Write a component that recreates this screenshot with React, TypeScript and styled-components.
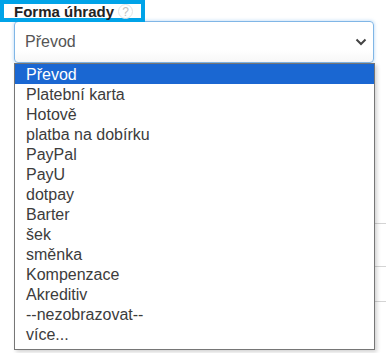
import React from "react";
import styled, { createGlobalStyle } from "styled-components";

const options = [
  "Převod",
  "Platební karta",
  "Hotově",
  "platba na dobírku",
  "PayPal",
  "PayU",
  "dotpay",
  "Barter",
  "šek",
  "směnka",
  "Kompenzace",
  "Akreditiv",
  "--nezobrazovat--",
  "více...",
];

const GlobalStyle = createGlobalStyle`
  html, body {
    margin: 0;
    padding: 0;
    background: #fff;
    font-family: "Liberation Sans", Arial, sans-serif;
  }
`;

const Page = styled.div`
  position: relative;
  width: 386px;
  height: 353px;
  overflow: hidden;
  background: #fff;
`;

const LabelBox = styled.div`
  display: inline-flex;
  align-items: center;
  gap: 4px;
  width: 145px;
  height: 22px;
  box-sizing: border-box;
  border: 4px solid #00a3e8;
  padding: 1px 0 0 10px;
  background: #fff;
`;

const Label = styled.span`
  font-weight: bold;
  font-size: 15px;
  color: #222;
  line-height: 14px;
`;

const Help = styled.span`
  display: inline-flex;
  align-items: center;
  justify-content: center;
  width: 13px;
  height: 13px;
  border-radius: 50%;
  border: 1px solid #e4e4e4;
  color: #c0c0c0;
  font-size: 12px;
  line-height: 12px;
`;

const Field = styled.div`
  margin: -1px 12px 0 14px;
  height: 42px;
  box-sizing: border-box;
  border: 1px solid #80b6e6;
  border-radius: 4px;
  box-shadow: 0 0 3px 1px rgba(120, 180, 235, 0.35);
  display: flex;
  align-items: center;
  justify-content: space-between;
  padding: 0 6px 0 10px;
  background: linear-gradient(#fff 70%, #f7f7f7);
`;

const Value = styled.span`
  font-size: 16px;
  color: #555;
`;

const Rows = styled.div`
  display: flex;
  flex-direction: column;
`;

const Row = styled.div<{ $h: number }>`
  height: ${({ $h }) => $h}px;
  border-bottom: 1px solid #d4d4d4;
  margin-left: 14px;
`;

const Popup = styled.ul`
  position: absolute;
  left: 14px;
  top: 63px;
  width: 361px;
  margin: 0;
  padding: 0 0 5px;
  list-style: none;
  box-sizing: border-box;
  border: 1px solid #767676;
  background: #fff;
  box-shadow: 2px 2px 4px rgba(0, 0, 0, 0.18);
`;

const Item = styled.li<{ $active?: boolean }>`
  height: 20px;
  line-height: 21px;
  padding-left: 11px;
  font-size: 16px;
  color: ${({ $active }) => ($active ? "#fff" : "#3c3c3c")};
  background: ${({ $active }) => ($active ? "#1a67d2" : "transparent")};
`;

export default function App() {
  return (
    <Page>
      <GlobalStyle />
      <LabelBox>
        <Label>Forma úhrady</Label>
        <Help>?</Help>
      </LabelBox>
      <Field>
        <Value>Převod</Value>
        <svg width="12" height="8" viewBox="0 0 12 8">
          <path d="M1.5 1.5 L6 6 L10.5 1.5" fill="none" stroke="#444" strokeWidth="2" />
        </svg>
      </Field>
      <Rows>
        <Row $h={160} />
        <Row $h={42} />
        <Row $h={34} />
      </Rows>
      <Popup>
        {options.map((o, i) => (
          <Item key={o} $active={i === 0}>
            {o}
          </Item>
        ))}
      </Popup>
    </Page>
  );
}
